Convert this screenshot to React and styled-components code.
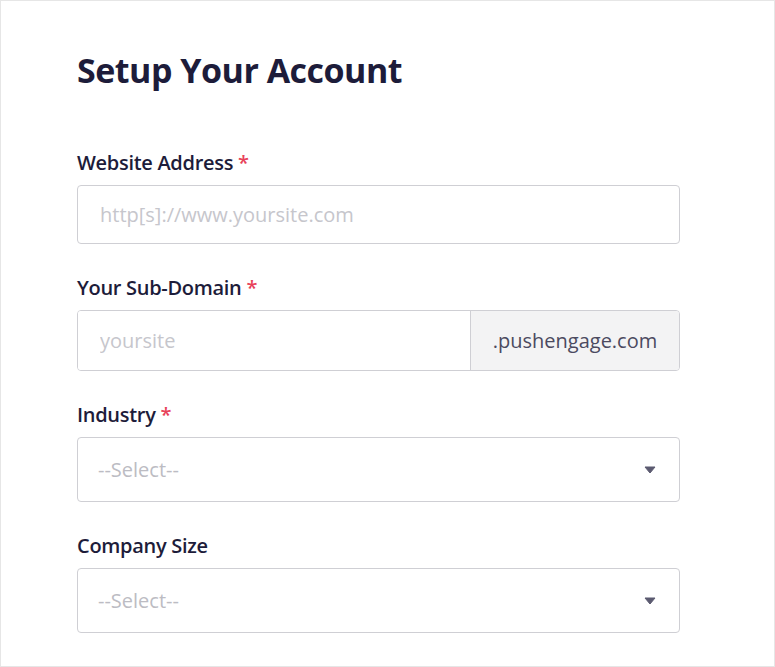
import styled, { createGlobalStyle } from "styled-components";

const GlobalStyle = createGlobalStyle`
  html, body {
    margin: 0;
    padding: 0;
    background: #ffffff;
  }
  * {
    box-sizing: border-box;
  }
`;

const fields = [
  { id: "website", label: "Website Address", required: true, type: "input", placeholder: "http[s]://www.yoursite.com" },
  { id: "subdomain", label: "Your Sub-Domain", required: true, type: "addon", placeholder: "yoursite", addon: ".pushengage.com" },
  { id: "industry", label: "Industry", required: true, type: "select", placeholder: "--Select--" },
  { id: "size", label: "Company Size", required: false, type: "select", placeholder: "--Select--" },
];

const Caret = () => (
  <svg width="12" height="8" viewBox="0 0 12 8">
    <path d="M1 1h10L6 7z" fill="#5b5a70" stroke="#5b5a70" strokeWidth="1" strokeLinejoin="round" />
  </svg>
);

const App = () => {
  return (
    <>
      <GlobalStyle />
      <Card>
        <Title>Setup Your Account</Title>
        <Form>
          {fields.map((field) => (
            <Field key={field.id}>
              <Label htmlFor={field.id}>
                {field.label}
                {field.required && <Star>*</Star>}
              </Label>
              {field.type === "input" && (
                <TextInput id={field.id} placeholder={field.placeholder} />
              )}
              {field.type === "addon" && (
                <Group>
                  <GroupInput id={field.id} placeholder={field.placeholder} />
                  <Addon>{field.addon}</Addon>
                </Group>
              )}
              {field.type === "select" && (
                <SelectBox id={field.id}>
                  <SelectText>{field.placeholder}</SelectText>
                  <Caret />
                </SelectBox>
              )}
            </Field>
          ))}
        </Form>
      </Card>
    </>
  );
};

export default App;

const Card = styled.div`
  width: 775px;
  height: 667px;
  border: 1px solid #e6e6e6;
  padding: 45px 94px 0 76px;
  font-family: "Open Sans", "Noto Sans", sans-serif;
  overflow: hidden;
`;

const Title = styled.h1`
  margin: 0;
  font-size: 34px;
  font-weight: 700;
  color: #1d1c3a;
  letter-spacing: -0.5px;
  line-height: 48px;
`;

const Form = styled.div`
  display: flex;
  flex-direction: column;
  gap: 31px;
  margin-top: 56px;
`;

const Field = styled.div`
  display: flex;
  flex-direction: column;
  gap: 9px;
`;

const Label = styled.label`
  font-size: 20px;
  font-weight: 600;
  color: #1d1c3a;
  line-height: 26px;
  letter-spacing: -0.3px;
`;

const Star = styled.span`
  color: #e8425a;
  margin-left: 5px;
`;

const TextInput = styled.input`
  height: 59px;
  width: 100%;
  border: 1px solid #cfcfd4;
  border-radius: 4px;
  padding: 0 22px;
  font-family: inherit;
  font-size: 20px;
  color: #333;
  outline: none;
  &::placeholder {
    color: #c6c6cc;
  }
`;

const Group = styled.div`
  display: flex;
  height: 61px;
  border: 1px solid #cfcfd4;
  border-radius: 4px;
  overflow: hidden;
`;

const GroupInput = styled.input`
  flex: 1;
  min-width: 0;
  border: none;
  border-right: 1px solid #cfcfd4;
  padding: 0 22px;
  font-family: inherit;
  font-size: 20px;
  outline: none;
  &::placeholder {
    color: #c6c6cc;
  }
`;

const Addon = styled.div`
  width: 208px;
  display: flex;
  align-items: center;
  justify-content: center;
  background: #f3f3f4;
  color: #4b4a60;
  font-size: 20px;
`;

const SelectBox = styled.div`
  height: 65px;
  border: 1px solid #cfcfd4;
  border-radius: 4px;
  display: flex;
  align-items: center;
  justify-content: space-between;
  padding: 0 23px 0 20px;
`;

const SelectText = styled.span`
  font-size: 20px;
  color: #bcbcc3;
`;
